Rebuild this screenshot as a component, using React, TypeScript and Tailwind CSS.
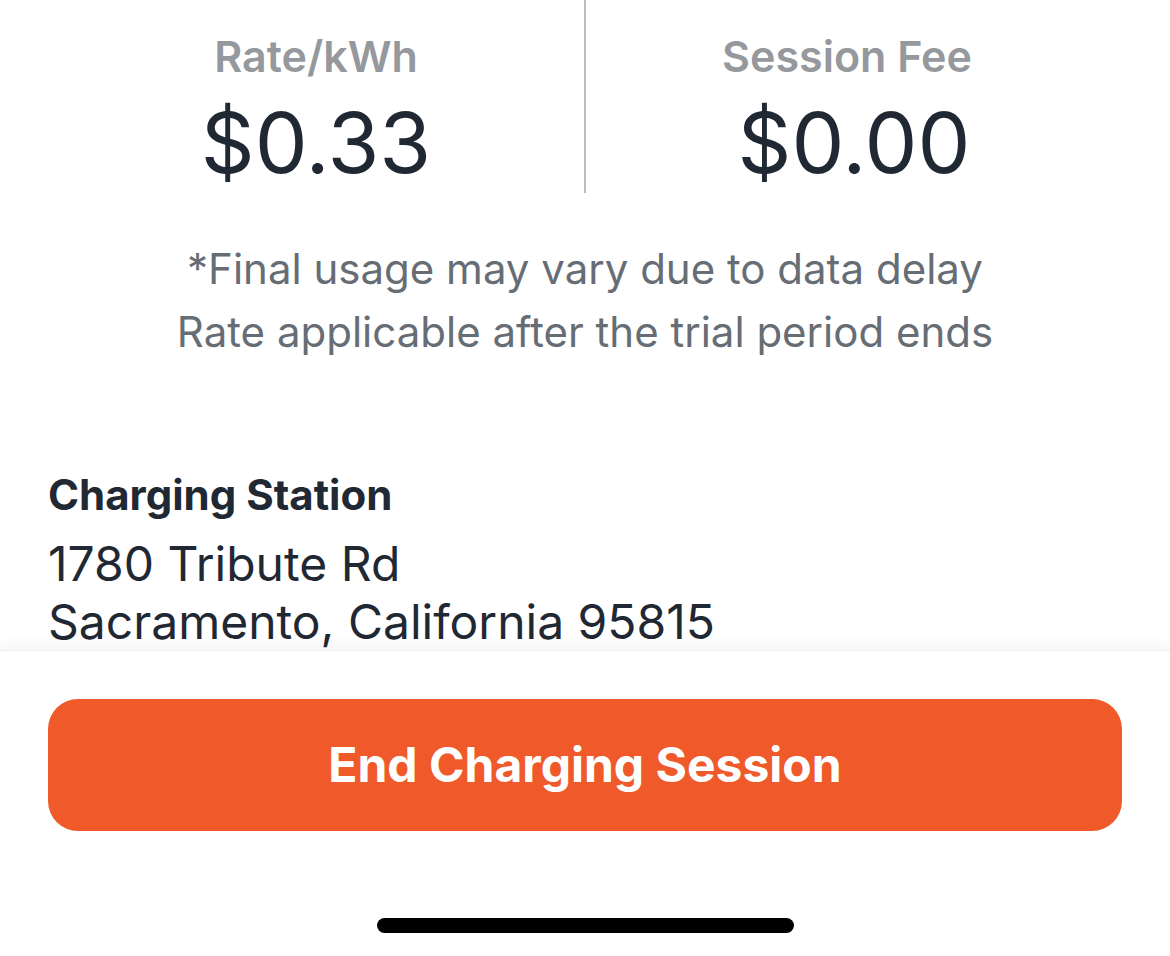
import React from "react";

export default function App() {
  return (
    <div
      className="w-[1170px] h-[956px] bg-white flex flex-col overflow-hidden"
      style={{ fontFamily: "Inter, 'Noto Sans', sans-serif" }}
    >
      <div className="h-[650px] overflow-hidden px-12 flex flex-col">
        <div className="flex h-[193px] shrink-0">
          <div className="flex-1 flex flex-col items-center pt-[30px]">
            <div className="text-[43px] leading-[52px] font-semibold text-[#95989d]">Rate/kWh</div>
            <div className="mt-[12px] text-[84px] leading-[98px] text-[#1f2833]">$0.33</div>
          </div>
          <div className="w-[2px] bg-[#bdbdc0]" />
          <div className="flex-1 flex flex-col items-center pt-[30px]">
            <div className="mr-[14px] text-[43px] leading-[52px] font-semibold text-[#95989d]">Session Fee</div>
            <div className="mt-[12px] text-[84px] leading-[98px] text-[#1f2833]">$0.00</div>
          </div>
        </div>
        <div className="mt-[44px] text-center text-[42px] leading-[63px] text-[#676d75] shrink-0">
          <div>*Final usage may vary due to data delay</div>
          <div>Rate applicable after the trial period ends</div>
        </div>
        <div className="mt-[107px] shrink-0">
          <div className="text-[42px] leading-[50px] font-bold text-[#1f2833]">Charging Station</div>
          <div className="mt-[15px] text-[48px] leading-[58px] text-[#1f2833]">1780 Tribute Rd</div>
          <div className="text-[48px] leading-[58px] text-[#1f2833]">Sacramento, California 95815</div>
        </div>
      </div>
      <div className="flex-1 bg-white shadow-[0_-6px_14px_rgba(0,0,0,0.04)] border-t border-[#efefef] px-12 pt-12 flex flex-col items-center">
        <button className="w-full h-[132px] rounded-[30px] bg-[#f05a2b] text-white text-[48px] font-bold">
          End Charging Session
        </button>
        <div className="mt-[87px] w-[417px] h-[15px] rounded-full bg-black" />
      </div>
    </div>
  );
}
